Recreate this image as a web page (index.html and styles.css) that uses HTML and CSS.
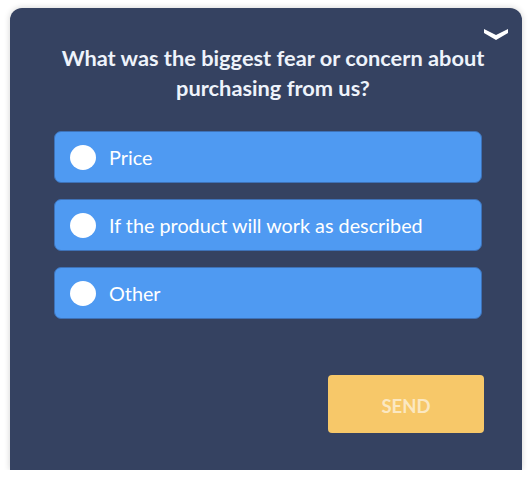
FILE: index.html
```html
<!DOCTYPE html>
<html>
<head>
<meta charset="utf-8">
<link rel="stylesheet" href="styles.css">
</head>
<body>
<div class="panel">
  <button class="collapse" aria-label="Collapse">
    <svg width="26" height="14" viewBox="0 0 26 14"><path d="M1 2 L13 8 L25 2 L25 6 L13 13 L1 6 Z" fill="#ffffff"/></svg>
  </button>
  <h1 class="question">What was the biggest fear or concern about purchasing from us?</h1>
  <div class="options">
    <label class="option"><span class="radio"></span><span class="label">Price</span></label>
    <label class="option"><span class="radio"></span><span class="label">If the product will work as described</span></label>
    <label class="option"><span class="radio"></span><span class="label">Other</span></label>
  </div>
  <div class="actions">
    <button class="send">SEND</button>
  </div>
</div>
</body>
</html>
```
FILE: styles.css
```css
html, body {
  margin: 0;
  padding: 0;
  background: #ffffff;
}
body {
  padding: 8px 10px 0 10px;
  font-family: "Lato", "Open Sans", sans-serif;
}
.panel {
  position: relative;
  background: #354261;
  border-radius: 12px 12px 0 0;
  height: 462px;
  width: 512px;
  box-sizing: border-box;
  padding: 35px 40px 0 44px;
  box-shadow: 0 0 6px rgba(0, 0, 0, 0.18);
}
.collapse {
  position: absolute;
  top: 19px;
  right: 13px;
  background: none;
  border: 0;
  padding: 0;
  line-height: 0;
}
.question {
  margin: 0 -12px 0 -2px;
  color: #eef3fb;
  font-size: 21.8px;
  font-weight: 700;
  line-height: 30px;
  text-align: center;
}
.options {
  margin-top: 28px;
  display: flex;
  flex-direction: column;
  gap: 16px;
}
.option {
  display: flex;
  align-items: center;
  height: 52px;
  box-sizing: border-box;
  background: #4f9af2;
  border: 1px solid #3e72b8;
  border-radius: 7px;
  padding-left: 15px;
}
.radio {
  width: 26px;
  height: 25px;
  border-radius: 50%;
  background: #ffffff;
  flex: none;
}
.label {
  margin-left: 13px;
  color: #ffffff;
  font-size: 19.8px;
  margin-top: -1px;
}
.actions {
  display: flex;
  justify-content: flex-end;
  margin-top: 56px;
}
.send {
  width: 156px;
  height: 58px;
  border: 0;
  border-radius: 4px;
  background: #f7c869;
  color: #fbe8c2;
  font-family: "Lato", sans-serif;
  font-weight: 700;
  font-size: 18.5px;
  padding-top: 5px;
  margin-right: -2px;
}
```
